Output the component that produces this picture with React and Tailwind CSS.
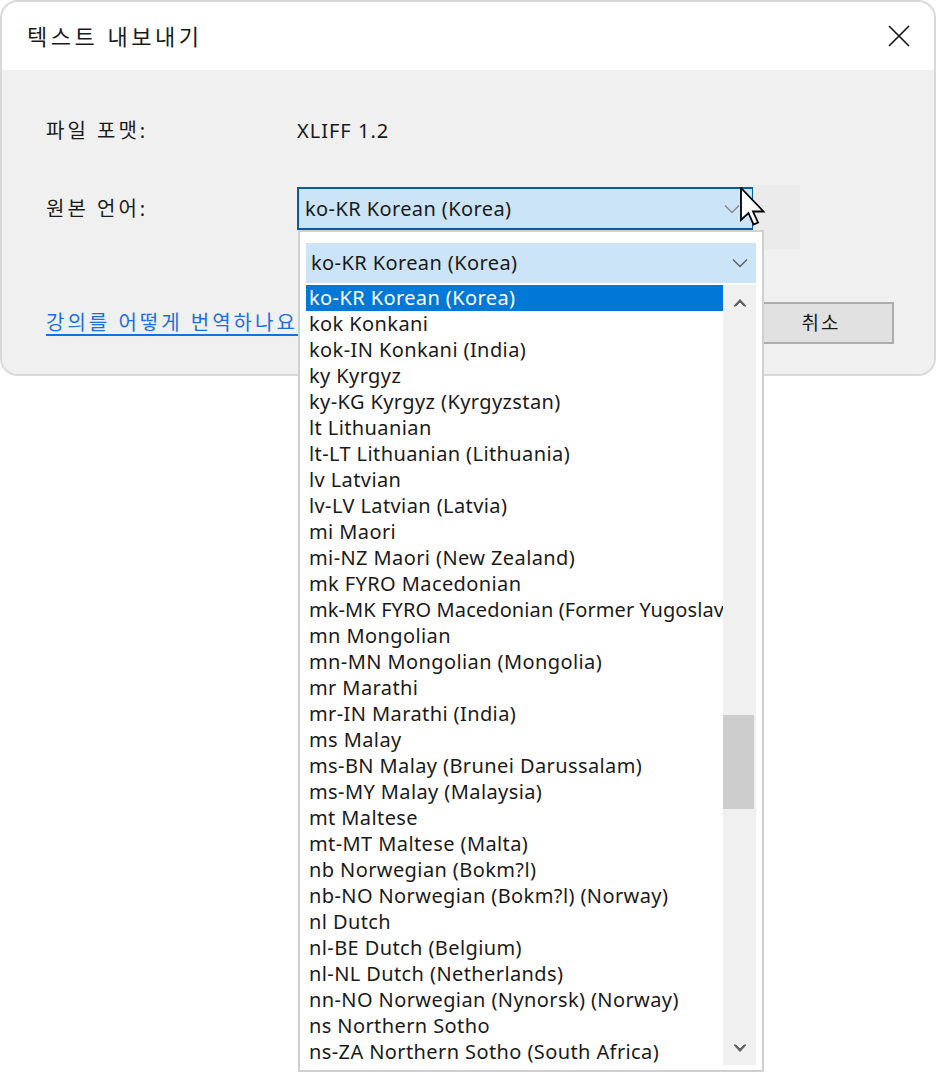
import React from 'react';

const items = [
  'ko-KR Korean (Korea)',
  'kok Konkani',
  'kok-IN Konkani (India)',
  'ky Kyrgyz',
  'ky-KG Kyrgyz (Kyrgyzstan)',
  'lt Lithuanian',
  'lt-LT Lithuanian (Lithuania)',
  'lv Latvian',
  'lv-LV Latvian (Latvia)',
  'mi Maori',
  'mi-NZ Maori (New Zealand)',
  'mk FYRO Macedonian',
  'mk-MK FYRO Macedonian (Former Yugoslav',
  'mn Mongolian',
  'mn-MN Mongolian (Mongolia)',
  'mr Marathi',
  'mr-IN Marathi (India)',
  'ms Malay',
  'ms-BN Malay (Brunei Darussalam)',
  'ms-MY Malay (Malaysia)',
  'mt Maltese',
  'mt-MT Maltese (Malta)',
  'nb Norwegian (Bokm?l)',
  'nb-NO Norwegian (Bokm?l) (Norway)',
  'nl Dutch',
  'nl-BE Dutch (Belgium)',
  'nl-NL Dutch (Netherlands)',
  'nn-NO Norwegian (Nynorsk) (Norway)',
  'ns Northern Sotho',
  'ns-ZA Northern Sotho (South Africa)',
];

const FONT = { fontFamily: '"Noto Sans", "Noto Sans CJK KR", sans-serif' };

const Chevron = ({ className }) => (
  <svg width="16" height="10" viewBox="0 0 16 10" className={className}>
    <path d="M1 1.5 L8 8.5 L15 1.5" fill="none" stroke="currentColor" strokeWidth="1.4" />
  </svg>
);

export default function App() {
  return (
    <div className="relative w-[936px] h-[1074px] bg-white text-[#1a1a1a]" style={FONT}>
      {/* Dialog */}
      <div className="w-[936px] h-[376px] rounded-[18px] border-2 border-[#d8d8d8] overflow-hidden flex flex-col">
        <div className="h-[68px] bg-white flex items-center justify-between pl-[25px] pr-[24px]">
          <span className="text-[22px] tracking-[3.5px]">텍스트 내보내기</span>
          <svg width="22" height="22" viewBox="0 0 22 22">
            <path d="M1 1 L21 21 M21 1 L1 21" stroke="#111" strokeWidth="1.6" />
          </svg>
        </div>
        <div className="flex-1 bg-[#f0f0f0] relative pl-[44px]">
          <div className="h-[30px] mt-[46px] flex items-center">
            <span className="w-[251px] text-[20px] tracking-[3px]">파일 포맷:</span>
            <span className="text-[20px] tracking-[1px]">XLIFF 1.2</span>
          </div>
          <div className="h-[43px] mt-[41px] flex items-center">
            <span className="w-[251px] text-[20px] tracking-[3px]">원본 언어:</span>
            <div className="w-[457px] h-[43px] border-2 border-[#0a5aa0] bg-[#cce4f7] flex items-center justify-between pl-[6px] pr-[12px] text-[20px] tracking-[0.4px]">
              <span>ko-KR Korean (Korea)</span>
              <Chevron className="text-[#8a8a8a]" />
            </div>
          </div>
          <div className="h-[42px] mt-[72px] flex items-center justify-between pr-[40px]">
            <span className="text-[20px] text-[#1a6fe0] underline underline-offset-[4px] tracking-[3px] whitespace-nowrap">강의를 어떻게 번역하나요?</span>
            <div className="w-[132px] h-[42px] border-2 border-[#adadad] bg-[#e1e1e1] flex items-center justify-center pr-[14px] text-[19px] tracking-[2px]">
              취소
            </div>
          </div>
          {/* faint backdrop beside the combo */}
          <div className="absolute left-[751px] top-[115px] w-[47px] h-[64px] bg-[#ebebeb]" />
        </div>
      </div>

      {/* Dropdown popup */}
      <div className="absolute left-[298px] top-[230px] w-[466px] h-[842px] bg-white border-2 border-[#d0d0d0] flex flex-col pt-[11px] pl-[6px] pr-[6px] text-[20px] tracking-[0.4px]">
        <div className="h-[40px] bg-[#cce4f7] flex items-center justify-between pl-[5px] pr-[8px] mb-[2px]">
          <span>ko-KR Korean (Korea)</span>
          <Chevron className="text-[#606060]" />
        </div>
        <div className="flex h-[780px]">
          <div className="flex-1 overflow-hidden">
            {items.map((t, i) => (
              <div
                key={t}
                className={`h-[26px] flex items-center pl-[3px] whitespace-nowrap ${i === 0 ? 'bg-[#0078d7] text-white' : ''} ${i === 12 ? 'tracking-[0.1px]' : ''}`}
              >
                {t}
              </div>
            ))}
          </div>
          <div className="w-[33px] bg-[#f0f0f0] flex flex-col items-center">
            <div className="h-[33px] flex items-center justify-center">
              <svg width="14" height="10" viewBox="0 0 14 10">
                <path d="M1 9 L7 2.5 L13 9 L11 9 L7 5 L3 9 Z" fill="#606060" stroke="#606060" strokeWidth="1" strokeLinejoin="round" />
              </svg>
            </div>
            <div className="h-[397px]" />
            <div className="w-[31px] h-[94px] bg-[#cdcdcd] self-start" />
            <div className="flex-1" />
            <div className="h-[33px] flex items-center justify-center">
              <svg width="14" height="10" viewBox="0 0 14 10">
                <path d="M1 1 L7 7.5 L13 1 L11 1 L7 5 L3 1 Z" fill="#606060" stroke="#606060" strokeWidth="1" strokeLinejoin="round" />
              </svg>
            </div>
          </div>
        </div>
      </div>

      {/* Mouse cursor */}
      <svg className="absolute left-[740px] top-[187px]" width="26" height="40" viewBox="0 0 26 40">
        <path d="M1 1 L1 33 L8.5 26 L13.5 37.5 L18 35.5 L13 24.5 L23.5 24.5 Z" fill="white" stroke="black" strokeWidth="1.8" strokeLinejoin="miter" />
      </svg>
    </div>
  );
}
